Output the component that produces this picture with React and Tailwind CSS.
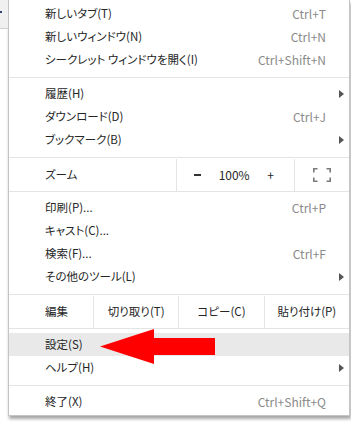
const font = "font-['Noto_Sans_CJK_JP','Noto_Sans',sans-serif] [font-feature-settings:'palt']";

function SubArrow() {
  return (
    <svg width="5" height="8" viewBox="0 0 5 8" className="block">
      <path d="M0 0 L5 4 L0 8 Z" fill="#555" />
    </svg>
  );
}

function Item({ label, shortcut, sub, active }) {
  return (
    <div
      className={`flex h-[23px] items-center pl-[36px] pt-[1px] ${active ? "bg-[#e9e9e9]" : ""}`}
    >
      <span className="flex-1 text-[#262626]">{label}</span>
      {shortcut && <span className="text-[12px] text-[#8a8a8a]">{shortcut}</span>}
      <span className="flex w-[23px] justify-end pr-[5px]">{sub && <SubArrow />}</span>
    </div>
  );
}

function Sep() {
  return <div className="mt-[6px] mb-[4px] border-t border-[#e4e4e4]" />;
}

function FullscreenIcon() {
  return (
    <svg width="18" height="14" viewBox="0 0 18 14" fill="none" stroke="#7a7a7a" strokeWidth="1.6">
      <path d="M0.8 4.5 V0.8 H4.5" />
      <path d="M13.5 0.8 H17.2 V4.5" />
      <path d="M0.8 9.5 V13.2 H4.5" />
      <path d="M13.5 13.2 H17.2 V9.5" />
    </svg>
  );
}

export default function App() {
  return (
    <div className={`relative h-[425px] w-[351px] overflow-hidden bg-white text-[11.5px] ${font}`}>
      <div className="flex">
        <div className="w-[8px]">
          <div className="relative h-[29px] border-b border-[#d0d0d0] bg-[#f0f0f0]">
            <span className="absolute left-0 top-[11px] h-[2px] w-[2px] bg-[#33406b]" />
          </div>
        </div>

        <div className="w-[342px] border-x border-b border-[#c4c4c4] pt-[2px] pb-[2px] shadow-[1px_3px_3px_rgba(0,0,0,0.35)]">
          <Item label="新しいタブ(T)" shortcut="Ctrl+T" />
          <Item label="新しいウィンドウ(N)" shortcut="Ctrl+N" />
          <Item label="シークレット ウィンドウを開く(I)" shortcut="Ctrl+Shift+N" />
          <Sep />
          <Item label="履歴(H)" sub />
          <Item label="ダウンロード(D)" shortcut="Ctrl+J" />
          <Item label="ブックマーク(B)" sub />

          <div className="mt-[6px] mb-[4px] flex h-[35px] border-y border-[#e4e4e4] pt-[1px]">
            <div className="flex w-[167px] items-center pl-[36px] text-[#262626]">ズーム</div>
            <div className="flex w-[118px] items-center border-l border-[#e4e4e4] text-[#262626]">
              <span className="ml-[17px] h-[1.5px] w-[7px] bg-[#333]" />
              <span className="flex-1 text-center text-[12px]">100%</span>
              <span className="mr-[20px] text-[12px]">+</span>
            </div>
            <div className="flex flex-1 items-center justify-center border-l border-[#e4e4e4]">
              <FullscreenIcon />
            </div>
          </div>

          <Item label="印刷(P)..." shortcut="Ctrl+P" />
          <Item label="キャスト(C)..." />
          <Item label="検索(F)..." shortcut="Ctrl+F" />
          <Item label="その他のツール(L)" sub />

          <div className="mt-[6px] mb-[4px] flex h-[35px] border-y border-[#e4e4e4] pt-[1px] text-[#262626]">
            <div className="flex w-[84px] items-center pl-[36px]">編集</div>
            <div className="flex flex-1 items-center justify-center border-l border-[#e4e4e4]">切り取り(T)</div>
            <div className="flex flex-1 items-center justify-center border-l border-[#e4e4e4]">コピー(C)</div>
            <div className="flex flex-1 items-center justify-center border-l border-[#e4e4e4]">貼り付け(P)</div>
          </div>

          <Item label="設定(S)" active />
          <Item label="ヘルプ(H)" sub />
          <Sep />
          <Item label="終了(X)" shortcut="Ctrl+Shift+Q" />
        </div>
      </div>

      <svg
        className="absolute left-[98px] top-[327px]"
        width="120"
        height="38"
        viewBox="98 327 120 38"
      >
        <path d="M100 346.5 L154 329 L154 338 L215 338 L215 355 L154 355 L154 364 Z" fill="#ff0000" />
      </svg>
    </div>
  );
}
